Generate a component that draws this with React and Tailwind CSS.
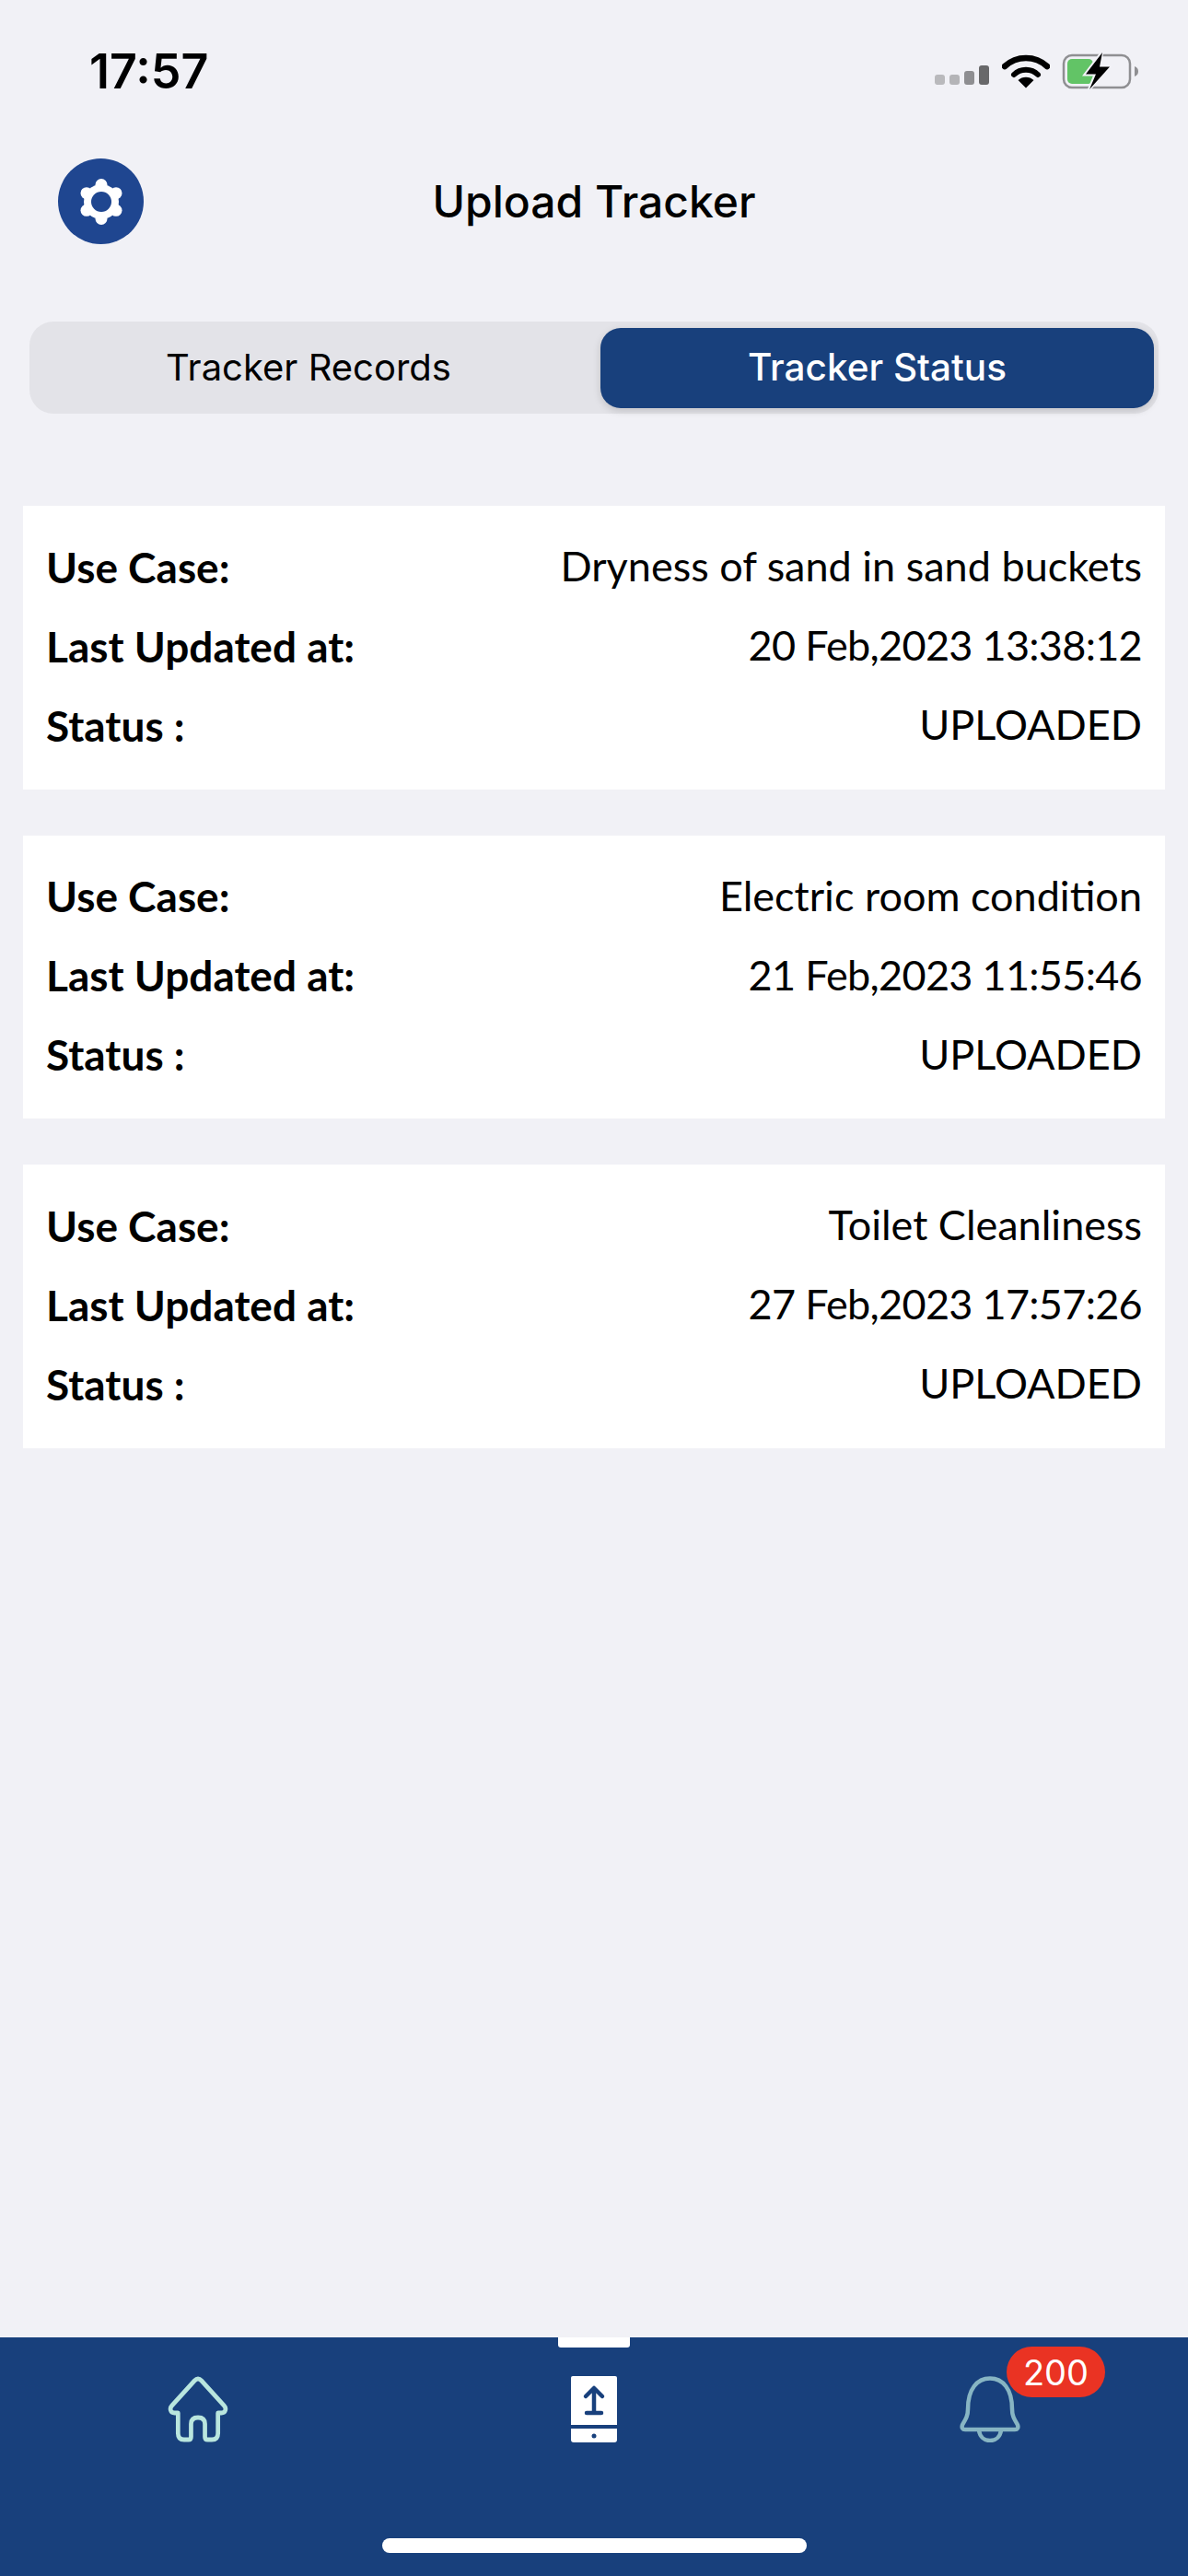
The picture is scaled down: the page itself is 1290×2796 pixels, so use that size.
const records = [
  { useCase: "Dryness of sand in sand buckets", updated: "20 Feb,2023 13:38:12" },
  { useCase: "Electric room condition", updated: "21 Feb,2023 11:55:46" },
  { useCase: "Toilet Cleanliness", updated: "27 Feb,2023 17:57:26" },
];

function StatusIcons() {
  return (
    <div className="flex items-end">
      {/* signal */}
      <svg width="64" height="22" viewBox="0 0 64 22" className="mb-[3px] mr-[9px]">
        <rect x="0" y="10" width="11" height="11" rx="3" fill="#b9b9bc" />
        <rect x="16" y="10" width="11" height="11" rx="3" fill="#b4b4b7" />
        <rect x="32" y="6" width="11" height="15" rx="3" fill="#8e8e91" />
        <rect x="48" y="0" width="11" height="21" rx="3" fill="#68686a" />
      </svg>
      {/* wifi */}
      <svg width="52" height="38" viewBox="0 0 52 38" className="mr-[13px]">
        <path d="M3 14 C16 2 36 2 49 14" fill="none" stroke="#000" strokeWidth="6.5" strokeLinecap="round" />
        <path d="M13 23 C20 16 32 16 39 23" fill="none" stroke="#000" strokeWidth="6" strokeLinecap="round" />
        <path d="M17.5 29 C22 24.5 30 24.5 34.5 29 L26 37.5 Z" fill="#000" />
      </svg>
      {/* battery charging */}
      <svg width="84" height="42" viewBox="0 0 84 42" className="-mb-[2px]">
        <rect x="2" y="4" width="72" height="35" rx="9" fill="none" stroke="#8f8f92" strokeWidth="2.5" />
        <rect x="6" y="8" width="28" height="27" rx="5" fill="#62c466" />
        <path d="M79 16 C82 17 83 19 83 21.5 C83 24 82 26 79 27 Z" fill="#8f8f92" />
        <path d="M44 0 L25 25 L36 25 L29 42 L53 16 L41 16 Z" fill="#f2f2f7" stroke="#f2f2f7" strokeWidth="3" />
        <path d="M44 1 L26 24.5 L37 24.5 L30 41 L52 16.5 L41 16.5 Z" fill="#000" />
      </svg>
    </div>
  );
}

function Gear() {
  return (
    <svg width="50" height="50" viewBox="0 0 50 50">
      <g fill="#fff">
        <circle cx="25" cy="25" r="19" />
        <circle cx="25" cy="6.5" r="6.5" />
        <circle cx="25" cy="43.5" r="6.5" />
        <circle cx="9" cy="15.7" r="6.5" />
        <circle cx="41" cy="15.7" r="6.5" />
        <circle cx="9" cy="34.3" r="6.5" />
        <circle cx="41" cy="34.3" r="6.5" />
      </g>
      <circle cx="25" cy="25" r="11" fill="#1f4690" />
    </svg>
  );
}

function Row({ label, value, tight }) {
  return (
    <div className="flex h-[86px] items-center justify-between text-black">
      <span className="text-[46px] font-bold">{label}</span>
      <span className={tight ? "text-[45px] tracking-[-0.7px]" : "text-[45px]"}>{value}</span>
    </div>
  );
}

export default function App() {
  return (
    <div className="flex min-h-[2796px] w-[1290px] flex-col bg-[#f1f1f6] font-['Lato',sans-serif]">
      {/* barre d'etat */}
      <div className="flex h-[154px] items-start justify-between pl-[97px] pr-[53px] pt-[51px]">
        <span className="font-['Inter',sans-serif] text-[52px] leading-[54px] font-semibold text-black">17:57</span>
        <div className="pt-[5px]">
          <StatusIcons />
        </div>
      </div>

      {/* en-tete */}
      <div className="relative flex h-[130px] items-center justify-center">
        <div className="absolute left-[63px] top-[18px] flex h-[93px] w-[93px] items-center justify-center rounded-full bg-[#1f4690]">
          <Gear />
        </div>
        <h1 className="font-['Inter',sans-serif] text-[48px] font-medium text-black">Upload Tracker</h1>
      </div>

      {/* onglets */}
      <div className="mx-[32px] mt-[65px] flex h-[100px] items-center justify-between rounded-[26px] bg-[#e3e3e8] pr-[5px]">
        <div className="w-[606px] text-center font-['Inter',sans-serif] text-[40px] text-black">Tracker Records</div>
        <div className="flex h-[87px] w-[601px] items-center justify-center rounded-[22px] bg-[#18407c] font-['Inter',sans-serif] text-[40.5px] font-medium text-white shadow-[0_3px_8px_rgba(0,0,0,0.15)]">
          Tracker Status
        </div>
      </div>

      {/* liste */}
      <main className="mx-[25px] mt-[100px] flex flex-1 flex-col gap-[50px]">
        {records.map((r) => (
          <div key={r.updated} className="bg-white px-[25px] pb-[26.5px] pt-[23px]">
            <Row label="Use Case:" value={r.useCase} />
            <Row label="Last Updated at:" value={r.updated} tight />
            <Row label="Status :" value="UPLOADED" />
          </div>
        ))}
      </main>

      {/* barre du bas */}
      <nav className="relative flex h-[259px] flex-col bg-[#18407c]">
        <div className="absolute left-[606px] top-0 h-[11px] w-[78px] rounded-b-[3px] bg-white" />
        <div className="flex h-[218px] items-start pt-[42px]">
          <div className="flex w-[430px] justify-center">
            <svg width="66" height="72" viewBox="0 0 70 72" preserveAspectRatio="none" fill="none" stroke="#b9e6de" strokeWidth="5" strokeLinejoin="round" strokeLinecap="round">
              <path d="M35 3 C33 3 32 4 31 5 L5 32 C2 35 3 40 8 40 L12 40 L12 62 C12 66 14 69 19 69 L24 69 C26 69 27 68 27 66 L27 52 C27 47 30 45 35 45 C40 45 43 47 43 52 L43 66 C43 68 44 69 46 69 L51 69 C56 69 58 66 58 62 L58 40 L62 40 C67 40 68 35 65 32 L39 5 C38 4 37 3 35 3 Z" />
            </svg>
          </div>
          <div className="flex w-[430px] justify-center">
            <svg width="50" height="72" viewBox="0 0 50 72">
              <path d="M2 0 H48 a2 2 0 0 1 2 2 V53 H0 V2 a2 2 0 0 1 2 -2 Z" fill="#fff" />
              <path d="M0 57 H50 V69 a3 3 0 0 1 -3 3 H3 a3 3 0 0 1 -3 -3 Z" fill="#fff" />
              <circle cx="25" cy="65" r="2.5" fill="#18407c" />
              <path d="M16 22 L25 13 L34 22 M25 14 V40 M17 40 H33" fill="none" stroke="#18407c" strokeWidth="4.5" strokeLinecap="round" strokeLinejoin="round" />
            </svg>
          </div>
          <div className="relative flex w-[430px] justify-center">
            <svg width="66" height="72" viewBox="0 0 66 72" fill="none" stroke="#87b5c3" strokeWidth="4.5" strokeLinejoin="round" strokeLinecap="round">
              <path d="M9 36 C9 14 19 2.5 33 2.5 C47 2.5 57 14 57 36 C57 43 59 46 63 53 C64 56 63 58 60 58 H6 C3 58 2 56 3 53 C7 46 9 43 9 36 Z" />
              <path d="M21 59 C22 66 27 70 33 70 C39 70 44 66 45 59" />
            </svg>
            <div className="absolute left-[233px] top-[-32px] flex h-[55px] w-[107px] items-center justify-center rounded-full bg-[#ea3323] font-['Inter',sans-serif] text-[38px] leading-none text-white">
              200
            </div>
          </div>
        </div>
        <div className="mx-auto h-[16px] w-[461px] rounded-full bg-white" />
      </nav>
    </div>
  );
}
